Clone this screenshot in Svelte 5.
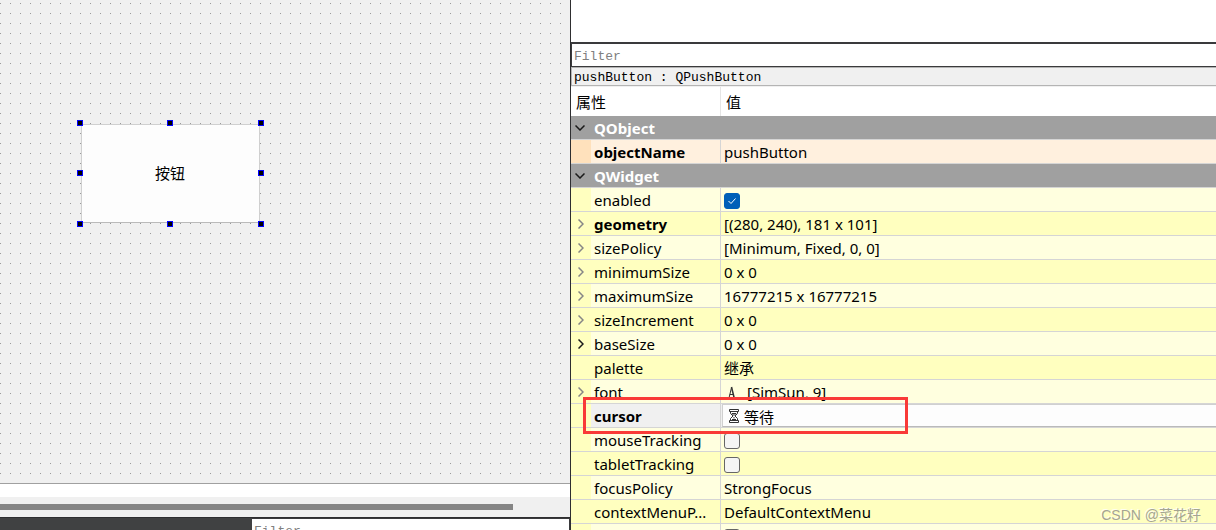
<script lang="ts">
  interface Property {
    name: string;
    kind?: 'group' | 'text' | 'check' | 'font' | 'cursor';
    value?: string;
    checked?: boolean;
    changed?: boolean;
    expandable?: boolean;
    active?: boolean;
    tone?: string;
  }

  const properties: Property[] = [
    { name: 'QObject', kind: 'group' },
    { name: 'objectName', value: 'pushButton', changed: true, tone: 'peach' },
    { name: 'QWidget', kind: 'group' },
    { name: 'enabled', kind: 'check', checked: true, tone: 'light' },
    { name: 'geometry', value: '[(280, 240), 181 x 101]', changed: true, expandable: true },
    { name: 'sizePolicy', value: '[Minimum, Fixed, 0, 0]', expandable: true, tone: 'light' },
    { name: 'minimumSize', value: '0 x 0', expandable: true },
    { name: 'maximumSize', value: '16777215 x 16777215', expandable: true, tone: 'light' },
    { name: 'sizeIncrement', value: '0 x 0', expandable: true },
    { name: 'baseSize', value: '0 x 0', expandable: true, active: true, tone: 'light' },
    { name: 'palette', value: '继承' },
    { name: 'font', kind: 'font', value: '[SimSun, 9]', expandable: true, tone: 'light' },
    { name: 'cursor', kind: 'cursor', value: '等待', changed: true, tone: 'selected' },
    { name: 'mouseTracking', kind: 'check', checked: false, tone: 'light' },
    { name: 'tabletTracking', kind: 'check', checked: false },
    { name: 'focusPolicy', value: 'StrongFocus', tone: 'light' },
    { name: 'contextMenuP...', value: 'DefaultContextMenu' },
    { name: '', kind: 'check', checked: false, tone: 'light' }
  ];

  const handles = ['nw', 'n', 'ne', 'w', 'e', 'sw', 's', 'se'];
</script>

<div class="designer">
  <div class="left">
    <div class="canvas">
      <div class="selection">
        <button class="push-button">按钮</button>
        {#each handles as h}
          <span class="handle {h}"></span>
        {/each}
      </div>
    </div>
    <div class="gap"></div>
    <div class="scrollbar"><div class="thumb"></div></div>
    <div class="dock">
      <div class="dock-dark"></div>
      <input class="filter" type="text" placeholder="Filter" aria-label="Filter actions" />
    </div>
  </div>

  <div class="right">
    <div class="inspector"></div>
    <input class="filter" type="text" placeholder="Filter" aria-label="Filter properties" />
    <div class="object-label">pushButton : QPushButton</div>

    <table>
      <colgroup>
        <col class="name-col" />
        <col />
      </colgroup>
      <thead>
        <tr>
          <th>属性</th>
          <th>值</th>
        </tr>
      </thead>
      <tbody>
        {#each properties as p}
          {#if p.kind === 'group'}
            <tr class="group">
              <td colspan="2">
                <div class="name">
                  <button class="expander" aria-label="Collapse {p.name}">
                    <svg width="10" height="6" viewBox="0 0 10 6"><path d="M0.5 0.5 5 5 9.5 0.5" /></svg>
                  </button>
                  <span>{p.name}</span>
                </div>
              </td>
            </tr>
          {:else}
            <tr class={p.tone}>
              <td>
                <div class="name">
                  <span class="strip">
                    {#if p.expandable}
                      <button class="expander" class:active={p.active} aria-label="Expand {p.name}">
                        <svg width="6" height="10" viewBox="0 0 6 10"><path d="M0.5 0.5 5 5 0.5 9.5" /></svg>
                      </button>
                    {/if}
                  </span>
                  <span class="title" class:changed={p.changed}>{p.name}</span>
                </div>
              </td>
              <td>
                {#if p.kind === 'check'}
                  <div class="value"><input type="checkbox" checked={p.checked} aria-label={p.name || 'property'} /></div>
                {:else if p.kind === 'font'}
                  <div class="value with-icon">
                    <svg width="16" height="16" viewBox="0 0 16 16" class="font-icon">
                      <path d="M3.5 13.5h3M8.500 13.5h3.500M5 13 7.500 2.500M5.800 9.500h3.500" />
                      <path class="stem" d="M7.500 2 10.200 13" />
                    </svg>
                    <span>{p.value}</span>
                  </div>
                {:else if p.kind === 'cursor'}
                  <div class="combo">
                    <svg width="10" height="14" viewBox="0 0 10 14" class="wait-icon">
                      <path d="M0.5 0.5h9v2h-9zM0.5 11.5h9v2h-9z" />
                      <path d="M1.5 2.5v2L4 7 1.5 9.5v2M8.5 2.5v2L6 7l2.5 2.5v2" />
                      <path d="M3 4.5h4L5 6.5zM5 8v1M3 10.5h4M5 9.5v2" />
                    </svg>
                    <select aria-label="cursor"><option>{p.value}</option></select>
                  </div>
                {:else}
                  <div class="value">{p.value}</div>
                {/if}
              </td>
            </tr>
          {/if}
        {/each}
      </tbody>
    </table>
    <div class="highlight"></div>
    <div class="watermark">CSDN @菜花籽</div>
  </div>
</div>

<style>
  :global(body) {
    margin: 0;
    background: #f0f0f0;
  }

  .designer {
    display: grid;
    grid-template-columns: 571fr 645fr;
    height: 100vh;
    overflow: hidden;
    font-family: 'Noto Sans', 'Noto Sans CJK SC', sans-serif;
    font-size: 15px;
    color: #000;
  }

  .left {
    display: flex;
    flex-direction: column;
    min-width: 0;
    border-right: 1px solid #2e2e30;
  }

  .canvas {
    position: relative;
    flex: 1;
    background: conic-gradient(from 0deg at 1px 1px, transparent 270deg, #9a9a9a 0) 0 3px / 10px 10px #f0f0f0;
    border-bottom: 1px solid #a0a0a0;
  }

  .selection {
    position: absolute;
    left: 80px;
    top: 123px;
    width: 181px;
    height: 101px;
    padding: 1px;
    box-sizing: border-box;
  }

  .push-button {
    width: 100%;
    height: 100%;
    padding: 0 1px 2px 0;
    border: 1px solid #d0d0d0;
    border-bottom-color: #bababa;
    background: #fdfdfd;
    font-family: 'Noto Sans CJK SC', sans-serif;
    font-size: 15px;
    color: #000;
  }

  .handle {
    position: absolute;
    width: 6px;
    height: 6px;
    box-sizing: border-box;
    border: 1px solid #00f;
    background: #000;
  }

  .nw, .w, .sw { left: -3px; }
  .n, .s { left: 87px; }
  .ne, .e, .se { right: -3px; }
  .nw, .n, .ne { top: -3px; }
  .w, .e { top: 47px; }
  .sw, .s, .se { bottom: -3px; }

  .gap {
    height: 13px;
    background: #fff;
  }

  .scrollbar {
    padding: 7px 0;
    background: #f0f0f0;
  }

  .thumb {
    width: 90%;
    height: 6px;
    background: #858585;
  }

  .dock {
    display: grid;
    grid-template-columns: 252fr 318fr;
    height: 13px;
    overflow: hidden;
    border-top: 1px solid #2e2e30;
    box-sizing: border-box;
    background: #404142;
  }

  .dock .filter {
    border-width: 1px 1px 1px 0;
  }

  .right {
    position: relative;
    min-width: 0;
    overflow: hidden;
    background: #fff;
  }

  .inspector {
    height: 42px;
  }

  .filter {
    display: block;
    width: 100%;
    height: 25px;
    box-sizing: border-box;
    margin: 0;
    padding: 2px 2px 0;
    border: solid #3a3a3c;
    border-width: 2px 0 1px 1px;
    border-radius: 0;
    outline: 0;
    background: #fff;
    font-family: 'Liberation Mono', monospace;
    font-size: 13px;
  }

  .filter::placeholder {
    color: #808080;
    opacity: 1;
  }

  .object-label {
    height: 17px;
    padding: 0 2px;
    border: solid #b4b4b4;
    border-width: 1px 0 1px 1px;
    background: #f0f0f0;
    font-family: 'Liberation Mono', monospace;
    font-size: 13px;
    line-height: 19px;
  }

  table {
    width: 100%;
    table-layout: fixed;
    border-collapse: separate;
    border-spacing: 0;
    border-top: 1px solid #f0f0f0;
  }

  .name-col {
    width: 150px;
  }

  th {
    height: 29px;
    padding: 0 5px;
    font-weight: 400;
    text-align: left;
  }

  th:first-child {
    border-right: 1px solid #e5e5e5;
  }

  td {
    height: 23px;
    padding: 0;
    border-bottom: 1px solid #d5d5d5;
    background: #ffffbf;
    line-height: 25px;
    white-space: nowrap;
  }

  td:first-child:not([colspan]) {
    border-right: 1px solid #d5d5d5;
  }

  .light td { background: #ffffdf; }
  .peach td { background: #fff0de; }
  .selected td { background: #f0f0f0; }

  .group td {
    background: #a0a0a0;
    color: #fff;
    font-weight: 700;
  }

  .name {
    display: flex;
    height: 23px;
  }

  .strip {
    flex: none;
    width: 20px;
    background: #ffffbf;
  }

  .peach .strip {
    background: #ffe1bc;
  }

  .title {
    padding-left: 3px;
  }

  .changed {
    font-weight: 700;
  }

  .expander {
    display: flex;
    align-items: center;
    justify-content: center;
    width: 20px;
    height: 23px;
    padding: 0;
    border: 0;
    background: none;
  }

  .group .expander {
    width: 18px;
    margin-right: 5px;
  }

  .expander path {
    fill: none;
    stroke: #868686;
    stroke-width: 1.5;
  }

  .group .expander path,
  .expander.active path {
    stroke: #1a1a1a;
  }

  .value {
    display: flex;
    align-items: center;
    height: 25px;
    margin-bottom: -2px;
    padding-left: 3px;
  }

  .with-icon {
    gap: 7px;
  }

  .font-icon path {
    fill: none;
    stroke: #333;
    stroke-width: 1;
  }

  .font-icon .stem {
    stroke-width: 1.5;
  }

  input[type='checkbox'] {
    appearance: none;
    width: 16px;
    height: 16px;
    margin: 0;
    box-sizing: border-box;
    border: 1px solid #666;
    border-radius: 3px;
    background: #f5f5f5;
  }

  input[type='checkbox']:checked {
    border-color: #005fb8;
    background: #005fb8 url("data:image/svg+xml,%3Csvg xmlns='http://www.w3.org/2000/svg' viewBox='0 0 14 14'%3E%3Cpath d='M3.5 7 6 9.5l4.500-5' fill='none' stroke='white'/%3E%3C/svg%3E");
  }

  .combo {
    display: flex;
    align-items: center;
    gap: 5px;
    height: 23px;
    box-sizing: border-box;
    margin-left: 1px;
    padding-left: 6px;
    border: 1px solid #d0d0d0;
    border-bottom-color: #bababa;
    border-right: 0;
    background: #fdfdfd;
  }

  .combo select {
    appearance: none;
    flex: 1;
    height: 21px;
    padding: 0;
    border: 0;
    background: none;
    font: inherit;
    color: #000;
  }

  .wait-icon path {
    fill: none;
    stroke: #333;
    stroke-width: 1;
  }

  .highlight {
    position: absolute;
    left: 12px;
    top: 397px;
    width: 325px;
    height: 37px;
    box-sizing: border-box;
    border: 3px solid #f93a37;
  }

  .watermark {
    position: absolute;
    right: 15px;
    bottom: 6px;
    font-family: 'Liberation Sans', 'Noto Sans CJK SC', sans-serif;
    font-size: 14px;
    color: #a5a592;
    text-shadow: -1px -1px 0 #fffff0;
  }
</style>
